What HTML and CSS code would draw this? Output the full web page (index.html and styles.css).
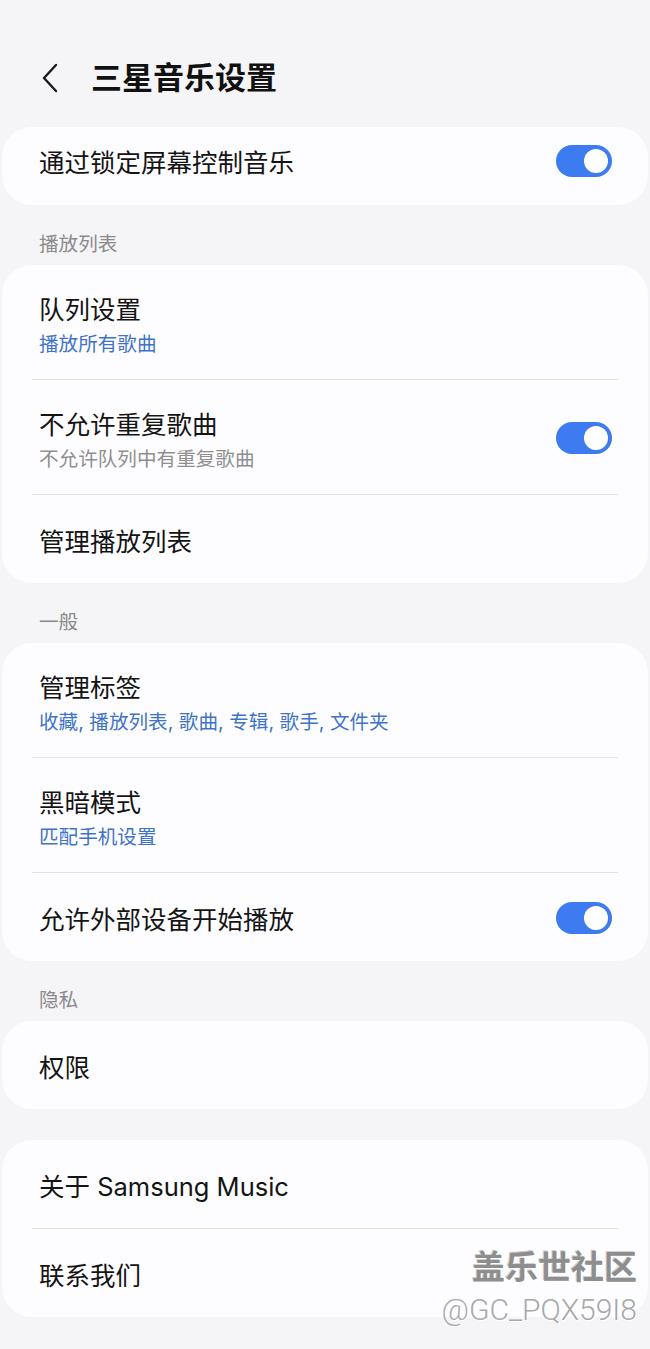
FILE: index.html
```html
<!DOCTYPE html>
<html lang="zh-CN">
<head>
<meta charset="utf-8">
<title>三星音乐设置</title>
<link rel="stylesheet" href="styles.css">
</head>
<body>
<div class="page">
  <header class="topbar">
    <span class="back" aria-label="返回">
      <svg width="18" height="30" viewBox="0 0 18 30"><path d="M15 2 L3 15 L15 28" fill="none" stroke="#1a1a1a" stroke-width="2.4" stroke-linecap="round" stroke-linejoin="round"/></svg>
    </span>
    <h1 class="page-title">三星音乐设置</h1>
  </header>

  <section class="card card-main">
    <div class="row row-main">
      <span class="title">通过锁定屏幕控制音乐</span>
      <span class="toggle"><span class="thumb"></span></span>
    </div>
  </section>

  <div class="section-label">播放列表</div>
  <section class="card">
    <div class="row two">
      <div class="text">
        <div class="title">队列设置</div>
        <div class="sub blue">播放所有歌曲</div>
      </div>
    </div>
    <div class="divider"></div>
    <div class="row two">
      <div class="text">
        <div class="title">不允许重复歌曲</div>
        <div class="sub gray">不允许队列中有重复歌曲</div>
      </div>
      <span class="toggle"><span class="thumb"></span></span>
    </div>
    <div class="divider"></div>
    <div class="row one">
      <span class="title">管理播放列表</span>
    </div>
  </section>

  <div class="section-label">一般</div>
  <section class="card">
    <div class="row two">
      <div class="text">
        <div class="title">管理标签</div>
        <div class="sub blue">收藏, 播放列表, 歌曲, 专辑, 歌手, 文件夹</div>
      </div>
    </div>
    <div class="divider"></div>
    <div class="row two">
      <div class="text">
        <div class="title">黑暗模式</div>
        <div class="sub blue">匹配手机设置</div>
      </div>
    </div>
    <div class="divider"></div>
    <div class="row one">
      <span class="title">允许外部设备开始播放</span>
      <span class="toggle"><span class="thumb"></span></span>
    </div>
  </section>

  <div class="section-label">隐私</div>
  <section class="card">
    <div class="row one">
      <span class="title">权限</span>
    </div>
  </section>

  <section class="card card-gap">
    <div class="row one">
      <span class="title">关于 Samsung Music</span>
    </div>
    <div class="divider"></div>
    <div class="row one">
      <span class="title">联系我们</span>
    </div>
  </section>

  <div class="watermark">
    <div class="wm-name">盖乐世社区</div>
    <div class="wm-id">@GC_PQX59I8</div>
  </div>
</div>
</body>
</html>
```

FILE: styles.css
```css
* { box-sizing: border-box; }

html, body {
  margin: 0;
  padding: 0;
  background: #f5f5f7;
}

body {
  font-family: Inter, "Noto Sans CJK SC", "Noto Sans", sans-serif;
  color: #111111;
}

.page {
  position: relative;
  width: 650px;
  min-height: 1349px;
  padding: 0 2px 30px;
}

.topbar {
  display: flex;
  align-items: center;
  padding: 57px 0 29px 39px;
  height: 127px;
}

.back {
  display: flex;
  width: 18px;
  height: 30px;
  margin-right: 32px;
}

.page-title {
  margin: 0;
  font-size: 31px;
  line-height: 40px;
  font-weight: 700;
  color: #111;
}

.card {
  background: #fdfdff;
  border-radius: 30px;
  overflow: hidden;
}

.card-gap { margin-top: 31px; }

.row {
  display: flex;
  align-items: center;
  justify-content: space-between;
  padding-left: 37px;
  padding-right: 36px;
}

.row-main {
  padding-top: 19px;
  padding-bottom: 25px;
}

.row.one {
  height: 88px;
  padding-top: 30px;
  padding-bottom: 24px;
}

.row.two {
  height: 114px;
  padding-top: 27px;
  padding-bottom: 20px;
}

.title {
  font-size: 25.5px;
  line-height: 34px;
  color: #141414;
}

.sub {
  margin-top: 3px;
  font-size: 19.6px;
  line-height: 28px;
}

.sub.blue { color: #3f73c8; }
.sub.gray { color: #8f8f8f; }

.divider {
  height: 1px;
  margin: 0 30px;
  background: #e3e3e6;
}

.section-label {
  padding: 26px 0 8px 37px;
  font-size: 19.6px;
  line-height: 26px;
  color: #8b8b8b;
}

.toggle {
  display: flex;
  justify-content: flex-end;
  align-items: center;
  flex: none;
  width: 56px;
  height: 32px;
  padding: 4px;
  border-radius: 16px;
  background: #3d7cf0;
}

.row-main .toggle { margin-top: -4px; }
.row.one .toggle { margin-top: -6px; margin-bottom: -6px; transform: translateY(-2px); }
.row.two .toggle { transform: translateY(-3px); }

.thumb {
  width: 24px;
  height: 24px;
  border-radius: 50%;
  background: #ffffff;
}

.watermark {
  position: absolute;
  right: 13px;
  top: 1244px;
  text-align: right;
}

.wm-name {
  font-family: "Noto Sans CJK SC", sans-serif;
  font-size: 33px;
  line-height: 42px;
  font-weight: 700;
  color: #8e8e8e;
  text-shadow: 1px 1px 0 #ffffff, -1px -1px 0 #d0d0d0;
}

.wm-id {
  font-family: Roboto, "Liberation Sans", sans-serif;
  font-weight: 300;
  font-size: 30px;
  line-height: 36px;
  margin-top: 6px;
  color: #a9a9a9;
  text-shadow: 1px 1px 0 #ffffff, -1px 0 0 #ffffff;
}
```
